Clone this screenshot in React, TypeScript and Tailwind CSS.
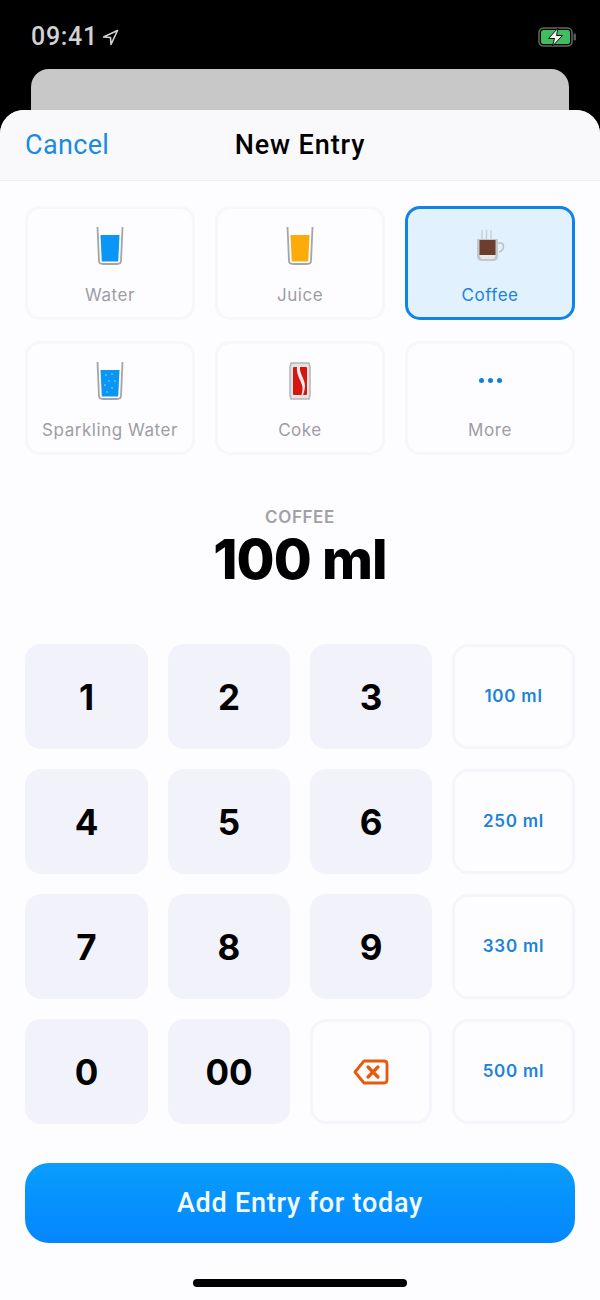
import type { ReactNode } from "react";

function Glass({ fill, bubbles }: { fill: string; bubbles?: boolean }) {
  return (
    <svg width="30" height="40" viewBox="0 0 30 40" fill="none">
      <path d="M2.5 1 L4 35 Q4.2 38 8 38 H22 Q25.8 38 26 35 L27.5 1" stroke="#a3a5a8" strokeWidth="1.8" />
      <path d="M5.5 9 H24.5 L23.2 35.5 H6.8 Z" fill={fill} />
      {bubbles && (
        <g fill="#6cc2fb">
          <circle cx="11" cy="14" r="0.9" />
          <circle cx="17" cy="13" r="0.9" />
          <circle cx="14" cy="20" r="0.9" />
          <circle cx="20" cy="20" r="0.9" />
          <circle cx="10" cy="24" r="0.9" />
          <circle cx="17" cy="27" r="0.9" />
          <circle cx="12" cy="31" r="0.9" />
        </g>
      )}
    </svg>
  );
}

function CoffeeCup() {
  return (
    <svg width="32" height="33" viewBox="0 0 32 33" fill="none">
      <path d="M8 1 V10 M12.5 1 V10 M17 1 V10" stroke="#c9ced3" strokeWidth="1.4" />
      <path d="M24 14 H26.5 Q29.5 14 29.5 17.5 Q29.5 21.5 25 23" stroke="#bcc0c4" strokeWidth="1.5" />
      <path d="M3 10 V27 Q3 32 8 32 H19 Q24 32 24 27 V10 Z" fill="#c3c7cb" />
      <path d="M5.5 11 H21.5 V26 H5.5 Z" fill="#6b3f2c" />
      <path d="M5.5 26 H21.5 Q21 30 18 30 H9 Q6 30 5.5 26 Z" fill="#e6eaee" />
    </svg>
  );
}

function CokeCan() {
  return (
    <svg width="24" height="38" viewBox="0 0 24 38" fill="none">
      <path d="M3 1 H21 L22 5 V33 L21 37 H3 L2 33 V5 Z" fill="#e4e4e6" stroke="#b4b5b8" strokeWidth="1.5" strokeLinejoin="round" />
      <rect x="5" y="5" width="14" height="28" rx="1" fill="#d5170f" />
      <path d="M9 5 H12 C11 11 17 17 17 24 C17 27 16 30 15 33 H13.5 C14.5 29 15 26 14 23 C12.5 18 8 12 9 5 Z" fill="#f7eceb" />
    </svg>
  );
}

function Drink({ icon, label, active }: { icon: ReactNode; label: string; active?: boolean }) {
  return (
    <button
      className={
        active
          ? "h-[114px] rounded-[15px] border-[3px] border-[#0f84e6] bg-[#e2f1fe] flex flex-col items-center"
          : "h-[114px] rounded-[15px] border-[3px] border-[#f6f6fb] bg-[#fdfcff] flex flex-col items-center"
      }
    >
      <span className="h-[41px] mt-[16px] flex items-center justify-center">{icon}</span>
      <span
        className={
          active
            ? "mt-[17px] text-[17px] leading-[24px] tracking-[0.55px] font-normal text-[#1b83d9]"
            : "mt-[17px] text-[17px] leading-[24px] tracking-[0.55px] font-normal text-[#9d9da4]"
        }
      >
        {label}
      </span>
    </button>
  );
}

function NumKey({ children }: { children: ReactNode }) {
  return (
    <button className="h-[105px] pt-[2px] rounded-[16px] bg-[#f1f2fa] text-[35px] font-bold text-black flex items-center justify-center">
      {children}
    </button>
  );
}

function OutlineKey({ children }: { children: ReactNode }) {
  return (
    <button className="h-[105px] pt-[1px] rounded-[16px] border-[3px] border-[#f5f5fb] bg-[#fdfcff] text-[17px] font-semibold tracking-[0.75px] text-[#1b83d9] flex items-center justify-center">
      {children}
    </button>
  );
}

const rows = [
  ["1", "2", "3", "100 ml"],
  ["4", "5", "6", "250 ml"],
  ["7", "8", "9", "330 ml"],
];

export default function App() {
  return (
    <div className="w-[600px] h-[1300px] bg-black overflow-hidden font-['Inter',sans-serif]">
      {/* status bar */}
      <div className="h-[69px] pl-[31px] pr-[22px] pt-[22px] flex items-start justify-between">
        <div className="flex items-center gap-[4px] text-[#d2d2d2]">
          <span className="text-[25px] leading-[30px] font-medium tracking-[0.7px] font-['Roboto',sans-serif]">09:41</span>
          <svg width="17" height="17" viewBox="0 0 17 17" fill="none" stroke="#d2d2d2" strokeWidth="1.6" strokeLinejoin="round">
            <path d="M15.5 1.5 L1.5 8 L8.5 8.5 L9 15.5 Z" />
          </svg>
        </div>
        <svg className="mt-[5px]" width="40" height="20" viewBox="0 0 40 20" fill="none">
          <rect x="1" y="1" width="33" height="18" rx="4.5" stroke="#5f6a60" strokeWidth="1.5" />
          <rect x="3" y="3" width="29" height="14" rx="2.5" fill="#3fbe5e" />
          <rect x="35.5" y="6.5" width="2.5" height="7" rx="1" fill="#55585a" />
          <path d="M20 1 L10.5 11.5 H16.5 L14.5 19 L24.5 8.5 H18.5 Z" fill="#f2f2f2" stroke="#111" strokeWidth="1" strokeLinejoin="round" />
        </svg>
      </div>

      {/* card behind the sheet */}
      <div className="mx-[31px] h-[51px] rounded-t-[18px] bg-[#c8c8c8]" />

      {/* sheet */}
      <div className="relative -mt-[10px] h-[1190px] rounded-t-[24px] bg-[#fdfcff] overflow-hidden">
        <div className="relative h-[71px] bg-[#f9f9fb] border-b border-[#eeeef0] flex items-center justify-center">
          <button className="absolute left-[25px] top-[17px] text-[27px] leading-[36px] tracking-[0.35px] text-[#1b8ae0] font-['Roboto',sans-serif]">Cancel</button>
          <h1 className="text-[27px] leading-[36px] font-medium tracking-[0.9px] text-black font-['Roboto',sans-serif]">New Entry</h1>
        </div>

        <div className="px-[25px] pt-[25px] grid grid-cols-3 gap-x-[20px] gap-y-[21px]">
          <Drink icon={<Glass fill="#0a96f5" />} label="Water" />
          <Drink icon={<Glass fill="#fbab0a" />} label="Juice" />
          <Drink icon={<CoffeeCup />} label="Coffee" active />
          <Drink icon={<Glass fill="#0a96f5" bubbles />} label="Sparkling Water" />
          <Drink icon={<CokeCan />} label="Coke" />
          <Drink
            icon={
              <span className="flex gap-[4px]">
                <span className="w-[5px] h-[5px] rounded-full bg-[#0f7fdc]" />
                <span className="w-[5px] h-[5px] rounded-full bg-[#0f7fdc]" />
                <span className="w-[5px] h-[5px] rounded-full bg-[#0f7fdc]" />
              </span>
            }
            label="More"
          />
        </div>

        <div className="mt-[50px] flex flex-col items-center">
          <div className="text-[17px] leading-[24px] font-semibold tracking-[0.6px] text-[#a0a0a6]">COFFEE</div>
          <div className="text-[55px] leading-[60px] font-extrabold tracking-[-0.9px] text-black">100 ml</div>
        </div>

        <div className="mt-[55px] px-[25px] grid grid-cols-[123px_122px_122px_123px] gap-x-[20px] gap-y-[20px]">
          {rows.map((row) => (
            <div key={row[3]} className="contents">
              <NumKey>{row[0]}</NumKey>
              <NumKey>{row[1]}</NumKey>
              <NumKey>{row[2]}</NumKey>
              <OutlineKey>{row[3]}</OutlineKey>
            </div>
          ))}
          <NumKey>0</NumKey>
          <NumKey>00</NumKey>
          <OutlineKey>
            <svg width="36" height="26" viewBox="0 0 36 26" fill="none" stroke="#e8590c" strokeWidth="2.8" strokeLinejoin="round" strokeLinecap="round">
              <path d="M11 2 H31 Q34 2 34 5 V21 Q34 24 31 24 H11 L2 13 Z" />
              <path d="M15 8 L25 18 M25 8 L15 18" strokeWidth="3.2" />
            </svg>
          </OutlineKey>
          <OutlineKey>500 ml</OutlineKey>
        </div>

        <div className="mt-[39px] px-[25px]">
          <button className="w-full h-[80px] rounded-[24px] bg-gradient-to-b from-[#0a9dfd] to-[#0686fd] text-[27px] font-medium tracking-[0.75px] text-[#f4fbff] font-['Roboto',sans-serif]">
            Add Entry for today
          </button>
        </div>

        <div className="mt-[36px] mx-auto w-[214px] h-[8px] rounded-full bg-black" />
      </div>
    </div>
  );
}
